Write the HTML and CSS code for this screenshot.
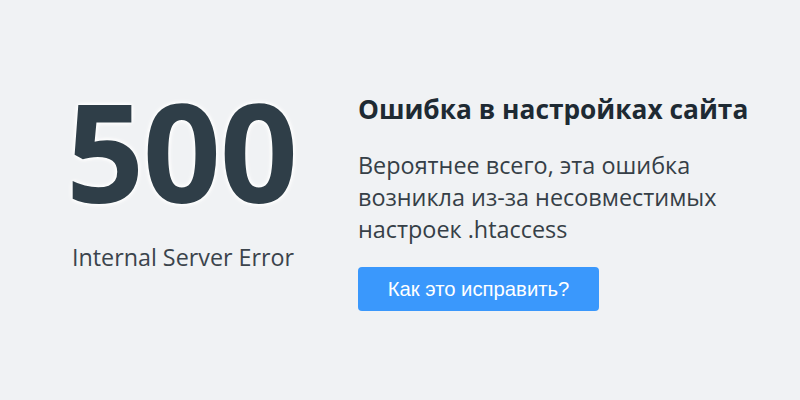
FILE: index.html
```html
<!DOCTYPE html>
<html lang="ru">
<head>
<meta charset="utf-8">
<title>500 Internal Server Error</title>
<link rel="stylesheet" href="styles.css">
</head>
<body>
<main class="page">
  <section class="code-block">
    <div class="code">500</div>
    <div class="code-label">Internal Server Error</div>
  </section>
  <section class="info">
    <h1 class="title">Ошибка в настройках сайта</h1>
    <p class="text">Вероятнее всего, эта ошибка возникла из-за несовместимых настроек .htaccess</p>
    <a class="btn" href="#">Как это исправить?</a>
  </section>
</main>
</body>
</html>
```

FILE: styles.css
```css
html, body {
  margin: 0;
  padding: 0;
}

body {
  width: 800px;
  height: 400px;
  background: #f0f2f4;
  font-family: "Open Sans", "Noto Sans", sans-serif;
  overflow: hidden;
}

.page {
  display: flex;
  align-items: flex-start;
  padding: 80px 0 0 66px;
  gap: 60px;
}

.code-block {
  display: flex;
  flex-direction: column;
  width: 232px;
}

.code {
  margin-top: 2px;
  font-size: 137px;
  font-weight: 700;
  line-height: 1;
  color: #2f3e48;
  letter-spacing: -1.5px;
  text-shadow: 0 0 4px #fff, 0 0 4px #fff, 0 0 6px #fff;
}

.code-label {
  margin-top: 23px;
  padding-left: 6px;
  font-size: 23.3px;
  color: #3b444c;
  line-height: 30px;
  white-space: nowrap;
}

.info {
  display: flex;
  flex-direction: column;
  align-items: flex-start;
  padding-top: 12px;
}

.title {
  margin: 0;
  font-size: 26.3px;
  font-weight: 700;
  color: #1e2a33;
  line-height: 34px;
  white-space: nowrap;
}

.text {
  margin: 23px 0 0;
  width: 380px;
  font-size: 23.4px;
  line-height: 32px;
  color: #363f47;
}

.btn {
  margin-top: 22px;
  display: flex;
  align-items: center;
  justify-content: center;
  width: 241px;
  height: 44px;
  background: #3a98fc;
  border-radius: 4px;
  color: #fff;
  text-decoration: none;
  font-family: "Liberation Sans", Arial, sans-serif;
  font-size: 20.3px;
}
```
